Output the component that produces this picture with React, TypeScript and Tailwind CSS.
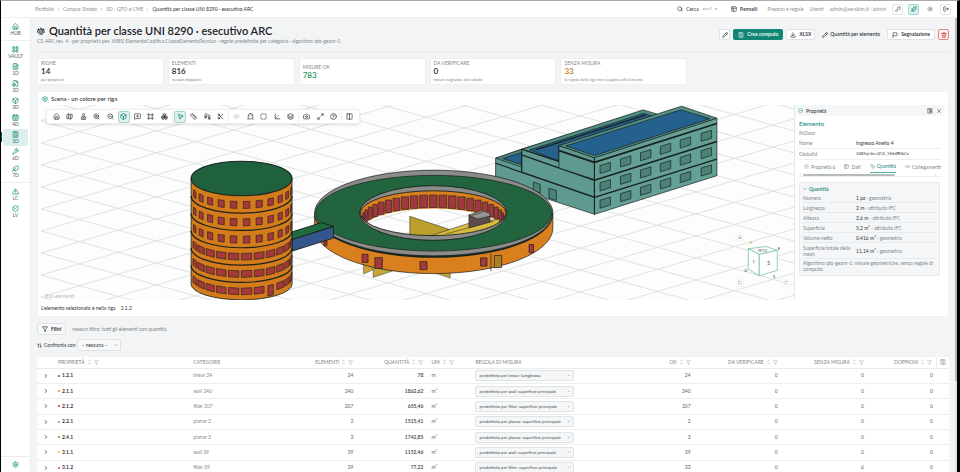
import React from "react";
import {
  House, LayoutGrid, FileText, FileBox, Box, CalendarRange, Calculator, Wrench, Leaf, TriangleAlert, BadgeCheck, Settings,
  Search, PanelsTopLeft, Sparkles, Sun, LogOut, Pencil, Download, Flag, Trash2, Scale, Map as MapIcon, Stamp, ZoomIn, ZoomOut,
  MessageSquarePlus, Frame, Boxes, MousePointer2, Ruler, Footprints, Scissors, Eye, Ghost, SquareDashed, Axis3d, Layers,
  Camera, Maximize2, CircleHelp, Columns2, X, Table2, Link2, List, ChevronRight, ChevronLeft, ChevronDown, ChevronUp, Filter, ArrowUpDown, Columns3,
  LayoutPanelLeft, CircleCheck, KeyRound, RotateCcw, RotateCw,
} from "lucide-react";

type Icon = React.ComponentType<{ className?: string; strokeWidth?: number }>;

/* ---------- navigation ---------- */

const NAV: { label: string; icon: Icon }[][] = [
  [{ label: "HUB", icon: House }],
  [
    { label: "VAULT", icon: LayoutGrid },
    { label: "1D", icon: FileText },
    { label: "2D", icon: FileBox },
    { label: "3D", icon: Box },
    { label: "4D", icon: CalendarRange },
    { label: "5D", icon: Calculator },
    { label: "6D", icon: Wrench },
    { label: "7D", icon: Leaf },
  ],
  [
    { label: "LC", icon: TriangleAlert },
    { label: "LV", icon: BadgeCheck },
  ],
];

function Sidebar() {
  return (
    <nav className="flex w-[30px] shrink-0 flex-col border-r border-[#e9ebed] bg-white pt-[3px]">
      {NAV.map((group, g) => (
        <div key={g} className={g === 0 ? "pb-[2px]" : "border-t border-[#eceeef] pt-[3px] pb-[2px]"}>
          {group.map(({ label, icon: Glyph }) => {
            const active = label === "5D";
            return (
              <a
                key={label}
                href="#"
                className={
                  "relative mx-[2px] flex h-[17px] flex-col items-center justify-center rounded-[2px] text-[5px] leading-[6px] " +
                  (active ? "bg-[#dcefec] text-[#12806f]" : "text-[#5d6468]")
                }
              >
                {active && <span className="absolute top-[3px] -left-[2px] h-[10px] w-px bg-[#0c5247]" />}
                <Glyph className="size-[7px] text-[#1d9078]" strokeWidth={2.5} />
                {label}
              </a>
            );
          })}
        </div>
      ))}
      <div className="mt-auto border-t border-[#e9ebed] py-1">
        <a href="#" aria-label="Impostazioni" className="flex justify-center">
          <Settings className="size-[7px] text-[#1d9078]" strokeWidth={2.5} />
        </a>
      </div>
    </nav>
  );
}

function TopBar() {
  return (
    <header className="flex h-[17px] shrink-0 items-center border-b border-[#eef0f1] bg-white pr-[6px] pl-[34px] text-[5px] leading-[7px] text-[#8b9297]">
      <nav className="flex items-center gap-[2px]" aria-label="Percorso">
        <a href="#">Portfolio</a>
        <ChevronRight className="size-[5px]" />
        <a href="#">Campus Simeto</a>
        <ChevronRight className="size-[5px]" />
        <a href="#">5D · QTO e CME</a>
        <ChevronRight className="size-[5px]" />
        <span className="text-[#30363a]">Quantità per classe UNI 8290 · esecutivo ARC</span>
      </nav>
      <div className="ml-auto flex items-center gap-[6px]">
        <button className="mr-2 flex items-center gap-[3px] text-[#30363a]">
          <Search className="size-[6px]" strokeWidth={2.5} />
          Cerca
          <kbd className="ml-px font-['Liberation_Mono',monospace] text-[4px] text-[#6b7378]">Ctrl K</kbd>
        </button>
        <button className="mr-1 flex items-center gap-[3px] font-semibold text-[#30363a]">
          <PanelsTopLeft className="size-[6px]" strokeWidth={2.5} />
          Pannelli
        </button>
        <a href="#">Prezzari e regole</a>
        <a href="#">Utenti</a>
        <span>admin@aerabim.it · admin</span>
        <div className="flex items-center gap-[5px] text-[#4b5257]">
          <button aria-label="Chiavi" className="flex size-[11px] items-center justify-center rounded-[2px] border border-[#e1e4e6]">
            <KeyRound className="size-[6px]" />
          </button>
          <button aria-label="Novità" className="flex size-[11px] items-center justify-center rounded-[2px] border border-[#a8d9d0] bg-[#e0f2ef] text-[#12907b]">
            <Sparkles className="size-[6px]" strokeWidth={2.5} />
          </button>
          <button aria-label="Tema" className="flex size-[11px] items-center justify-center">
            <Sun className="size-[6px]" />
          </button>
          <button aria-label="Esci" className="flex size-[11px] items-center justify-center rounded-[2px] border border-[#e1e4e6] text-[#22282b]">
            <LogOut className="size-[6px]" strokeWidth={2.5} />
          </button>
        </div>
      </div>
    </header>
  );
}

function PageHeader() {
  const outlined = "flex h-[11px] items-center gap-[3px] rounded-[2px] border border-[#dfe2e5] bg-white";
  return (
    <div className="flex justify-between border-b border-[#e8ebed] pt-[6px] pb-[6px]">
      <div>
        <h1 className="flex items-center gap-1 text-[11px] leading-[14px] font-semibold text-[#1c2225]">
          <Scale className="size-2" strokeWidth={2.5} />
          Quantità per classe UNI 8290 · esecutivo ARC
        </h1>
        <p className="text-[5px] leading-[7px] text-[#848b90]">
          CS-ARC rev. 4 · per proprietà pes. WBS) ElementoCodifica.ClasseElementoTecnico · regole predefinite per categoria · algoritmo qto-geom-1
        </p>
      </div>
      <div className="mt-[5px] flex h-[11px] items-center gap-[3px] text-[5px] leading-[7px] font-semibold text-[#262c30]">
        <button aria-label="Modifica" className={outlined + " w-[11px] justify-center"}>
          <Pencil className="size-[6px]" strokeWidth={2.5} />
        </button>
        <button className="flex h-[11px] items-center gap-[3px] rounded-[2px] bg-[#128675] px-[5px] text-white">
          <Calculator className="size-[6px]" />
          Crea computo
        </button>
        <button className={outlined + " px-[3px]"}>
          <Download className="size-[6px]" strokeWidth={2.5} />
          XLSX
        </button>
        <a href="#" className="flex items-center gap-[2px] px-1 font-medium">
          <Pencil className="size-[6px]" strokeWidth={2.5} />
          Quantità per elemento
        </a>
        <button className={outlined + " px-1"}>
          <Flag className="size-[6px]" strokeWidth={2.5} />
          Segnalazione
        </button>
        <button aria-label="Elimina" className="flex size-[11px] items-center justify-center rounded-[2px] border border-[#df8580] bg-[#fdf4f3] text-[#cf3f38]">
          <Trash2 className="size-[6px]" strokeWidth={2.5} />
        </button>
      </div>
    </div>
  );
}

const STATS = [
  { label: "RIGHE", value: "14", note: "per proprietà", tone: "text-[#22282b]" },
  { label: "ELEMENTI", value: "816", note: "nessun doppione", tone: "text-[#22282b]" },
  { label: "MISURE OK", value: "783", note: "", tone: "text-[#23935a]" },
  { label: "DA VERIFICARE", value: "0", note: "misure segnalate dal calcolo", tone: "text-[#22282b]" },
  { label: "SENZA MISURA", value: "33", note: "la regola della riga non si applica all'elemento", tone: "text-[#c07a22]" },
];

function Stats() {
  return (
    <section className="mt-[6px] grid grid-cols-7 gap-1">
      {STATS.map((s) => (
        <div key={s.label} className="flex h-[27px] flex-col justify-center overflow-hidden rounded-[2px] border border-[#eceeef] bg-white pl-[3px] whitespace-nowrap">
          <div className="text-[5px] leading-[7px] text-[#7f868b]">{s.label}</div>
          <div className={"text-[8px] leading-[9px] font-semibold " + s.tone}>{s.value}</div>
          {s.note && <div className="text-[4px] leading-[7px] text-[#7f868b]">{s.note}</div>}
        </div>
      ))}
    </section>
  );
}

/* ---------- 3D scene ---------- */

type Pt = [number, number];
const pts = (list: Pt[]) => list.map(([x, y]) => `${x.toFixed(1)},${y.toFixed(1)}`).join(" ");
const INK = "#18221f";

function Floor() {
  const lines = [];
  for (let i = -14; i < 26; i++) {
    const y = 99 + i * 22;
    lines.push(<line key={"d" + i} x1={42} y1={y} x2={794} y2={y + 208} />);
    lines.push(<line key={"u" + i} x1={42} y1={y} x2={794} y2={y - 222} />);
  }
  return (
    <g stroke="#dbdfe0" strokeWidth={0.9}>
      {lines}
    </g>
  );
}

/** A rectangle wrapped on an upright cylinder seen from slightly above. */
function curved(cx: number, rx: number, ry: number, y: number, h: number, deg: number, half: number): string {
  const at = (d: number): Pt => {
    const r = (d * Math.PI) / 180;
    return [cx + rx * Math.sin(r), y - ry * (1 - Math.cos(r))];
  };
  const [a, b] = [at(deg - half), at(deg + half)];
  return pts([a, b, [b[0], b[1] + h], [a[0], a[1] + h]]);
}

function Tower() {
  const cx = 242.3;
  const rx = 50.4;
  const shapes = [];
  for (let f = 0; f < 6; f++) {
    const low = f > 2;
    for (let k = -5; k <= 5; k++) {
      const door = f === 5 && k === 2;
      shapes.push(
        <polygon
          key={`${f}-${k}`}
          points={curved(cx, rx, 17, 201.5 + f * 17.3, door ? 10.5 : low ? 6.6 : 7, 5.7 + k * 14.8, low && !door ? 6 : 3.8)}
          fill="#a5383b"
          stroke={INK}
          strokeWidth={0.6}
        />,
      );
    }
  }
  return (
    <g>
      <path d="M191.9 178.5V284A50.4 15.7 0 0 0 292.7 284V178.5Z" fill="#d47b1b" stroke={INK} strokeWidth={0.8} />
      {shapes}
      {[1, 2, 3, 4, 5].map((f) => (
        <path key={f} d={`M191.9 ${178.8 + f * 17.3}a50.4 17 0 0 0 100.8 0`} fill="none" stroke={INK} strokeWidth={1.2} />
      ))}
      <ellipse cx={cx} cy={178.5} rx={rx} ry={17.3} fill="#1f613c" stroke={INK} strokeWidth={1} />
    </g>
  );
}

function Ring() {
  const inner = [];
  for (let k = -11; k <= 11; k++) {
    const r = (k * 7.8 * Math.PI) / 180;
    const x = 433.7 + 71 * Math.sin(r);
    const w = 7.4 * Math.cos(r) + 0.4;
    inner.push(
      <rect key={k} x={x - w / 2} y={217.5 - 22.5 * Math.cos(r)} width={w} height={12.5} fill="#a13840" stroke={INK} strokeWidth={0.6} />,
    );
  }
  return (
    <g strokeLinejoin="round">
      <g fill="#c3a53a" stroke={INK} strokeWidth={0.4}>
        <path d="M364 264v10l9-4v-6Z" />
        <path d="M373.7 266v11.3L393 271v-4Z" />
        <path d="M434 272l16.7 6v-8Z" />
      </g>
      <path d="M315.2 213V228A119 45.5 0 0 0 553.2 228V213Z" fill="#d97f1d" stroke={INK} strokeWidth={0.7} />
      <ellipse cx={434.2} cy={214.2} rx={119} ry={43.6} fill={INK} />
      <ellipse cx={434.2} cy={213} rx={119} ry={42.8} fill="#8b8b89" stroke={INK} strokeWidth={0.7} />
      <ellipse cx={434.2} cy={213.2} rx={118} ry={37.8} fill="#21643e" stroke={INK} strokeWidth={0.7} />
      <ellipse cx={433.7} cy={213} rx={73.7} ry={27.3} fill="#8b8b89" stroke={INK} strokeWidth={0.9} />
      <clipPath id="court">
        <ellipse cx={433.7} cy={213.2} rx={72.8} ry={22.4} />
      </clipPath>
      <clipPath id="ground">
        <ellipse cx={433.7} cy={231.5} rx={72.8} ry={23} />
      </clipPath>
      <g clipPath="url(#court)">
        <rect x={360} y={185} width={150} height={60} fill="#d97f1d" />
        {inner}
        <g clipPath="url(#ground)">
          <rect x={360} y={185} width={150} height={60} fill="#fdfdfd" />
          <Floor />
        </g>
        <g stroke={INK} strokeWidth={0.5}>
          <path d="M410.3 216.3L450 229.5L436 236H410.3Z" fill="#bd9f2f" />
          <path d="M430 236L470 223L500 219L499 224L462 238Z" fill="#d9b93e" />
          <path d="M446 234L494 221" fill="none" />
          <path d="M469.3 215V228L490.5 222V214Z" fill="#5b4b49" />
          <path d="M469.3 215L482 210.6L490.5 213.6V216L478 219Z" fill="#949494" />
          <path d="M472 215.5L483 212.3" fill="none" />
        </g>
      </g>
      <ellipse cx={433.7} cy={213.2} rx={72.8} ry={22.4} fill="none" stroke={INK} strokeWidth={0.9} />
      <g fill="#a5383b" stroke={INK} strokeWidth={0.7}>
        <rect x={324.6} y={240.6} width={3} height={5} />
        <rect x={362.6} y={254.2} width={6} height={8.2} />
        <rect x={375.5} y={257.6} width={7.4} height={10.8} />
        <rect x={420.5} y={261.5} width={7} height={8} />
        <rect x={481} y={257.8} width={6.4} height={8.2} />
        <rect x={529.4} y={244.4} width={4.4} height={8.2} />
        <rect x={494.8} y={255.4} width={7.2} height={12} fill="#a8802a" />
        <path d="M491.3 253.5V271" />
      </g>
      <path d="M293 231.8L322 222.6L334 226.2L293 239.6Z" fill="#1f6b3f" stroke={INK} strokeWidth={0.9} />
      <path d="M293 239.6L334 226.6V238L293 251Z" fill="#34568c" stroke={INK} strokeWidth={0.9} />
    </g>
  );
}

function Block() {
  const windows = [];
  const cols = [600.3, 620.7, 640.7, 660.5, 680.4, 701.3];
  for (const x of cols) {
    for (let r = 0; r < 3; r++) {
      const y = 165.6 - (x - 600.3) * 0.318 + r * 17.3;
      windows.push(
        <polygon key={`${x}-${r}`} points={pts([[x, y], [x + 10.4, y - 3.2], [x + 10.4, y + 4.8], [x, y + 8]])} fill="#4b8177" stroke={INK} strokeWidth={0.7} />,
      );
    }
  }
  return (
    <g stroke={INK} strokeWidth={0.7} strokeLinejoin="round">
      <path d="M496 158.3L522 149.3L640 112V160L594.7 214.3L496 182Z" fill="#5f9a90" />
      <path d="M496 158.3L522 149.3V167L496 158.3Z" fill="#4f897f" />
      <path d="M503 158.6L522 152.6V164.5Z" fill="#26618c" />
      <path d="M522 149.3L643.3 110L656.7 114L594 170L522 150.5Z" fill="#508d82" />
      <path d="M530 150L644 113.5L652 116L559 146V161Z" fill="#26618c" />
      <path d="M536 150L646 115" fill="none" strokeWidth={1.4} />
      <path d="M522 149.3V172L594.7 197V162L559.3 161.5Z" fill="#5f9a90" />
      <path d="M522 149.3L559.3 161.5M522 155L594.7 180.4M496 163.3L594.7 197.4M522 173V151" fill="none" strokeWidth={1.2} />
      <path d="M559.3 145.7L594.7 157.7V179.5L559.3 168Z" fill="#5f9a90" />
      <path d="M594.7 157.7L717 118.3V175.7L594.7 214.3Z" fill="#64a096" />
      <path d="M559.3 145.7L681.7 106.3L717 118.3L594.7 157.7Z" fill="#558f84" />
      <path d="M566 146L681 110L710 118.8L595 155.6Z" fill="#25618f" />
      <path d="M559.3 150.7L594.7 162.4L717 123.6" fill="none" strokeWidth={1.8} />
      <path d="M594.7 180.2L717 141.6M594.7 197.4L717 159.2" fill="none" strokeWidth={1.5} />
      <path d="M594.7 157.7V214.3" fill="none" strokeWidth={1} />
      {windows}
      <path d="M533.7 182.2L540.5 184.4V193.5L533.7 190ZM549.3 188.2L556.7 190.6V200.5L549.3 198Z" fill="#4b8177" />
    </g>
  );
}

function ViewCube() {
  return (
    <g>
      <g stroke="#62b9a8" strokeWidth={0.7} strokeLinejoin="round">
        <path d="M748.3 248.7L766 246.5L777.3 250.3L759.3 254.3Z" fill="#fff" />
        <path d="M748.3 248.7L759.3 254.3V275.7L748.3 269Z" fill="#fff" />
        <path d="M759.3 254.3L777.3 250.3V270.3L759.3 275.7Z" fill="#fff" />
      </g>
      <g fontSize={4} fill="#30363a" textAnchor="middle">
        <text x={762.5} y={251.5} fontSize={3}>TETTO</text>
        <text x={753.6} y={263}>1</text>
        <text x={768.6} y={264.6} fontSize={5}>S</text>
        <text x={751} y={244} fill="#c79a3c">N</text>
        <text x={779} y={250}>E</text>
        <text x={746} y={272.4}>O</text>
        <text x={774} y={278}>S</text>
      </g>
      <g fill="#fff" stroke="#dfe3e4" strokeWidth={0.5}>
        <circle cx={740} cy={237} r={4} />
        <circle cx={740} cy={282.5} r={4} />
        <circle cx={785.5} cy={282.5} r={4} />
      </g>
      <House x={737.7} y={234.6} width={4.6} height={4.6} color="#7f868b" />
      <RotateCcw x={737.7} y={280.2} width={4.6} height={4.6} color="#7f868b" />
      <RotateCw x={783.2} y={280.2} width={4.6} height={4.6} color="#7f868b" />
    </g>
  );
}

const TOOLS: { label: string; icon: Icon; state?: "on" | "off" }[][] = [
  [
    { label: "Vista iniziale", icon: House },
    { label: "Mappa", icon: MapIcon },
    { label: "Orientamento", icon: Stamp },
    { label: "Ingrandisci", icon: ZoomIn },
    { label: "Riduci", icon: ZoomOut },
    { label: "Modello", icon: Box, state: "on" },
    { label: "Commenta", icon: MessageSquarePlus },
    { label: "Griglia", icon: Frame },
    { label: "Gruppi", icon: Boxes },
  ],
  [
    { label: "Seleziona", icon: MousePointer2, state: "on" },
    { label: "Misura", icon: Ruler },
    { label: "Cammina", icon: Footprints },
    { label: "Seziona", icon: Scissors },
  ],
  [
    { label: "Mostra", icon: Eye, state: "off" },
    { label: "Trasparenza", icon: Ghost },
    { label: "Area", icon: SquareDashed },
    { label: "Assi", icon: Axis3d },
    { label: "Livelli", icon: Layers },
  ],
  [
    { label: "Istantanea", icon: Camera },
    { label: "Schermo intero", icon: Maximize2 },
    { label: "Aiuto", icon: CircleHelp },
  ],
  [{ label: "Pannello", icon: Columns2 }],
];

function Toolbar() {
  return (
    <div className="absolute top-1 left-[5px] flex h-[15px] w-[314px] items-center justify-between rounded-[3px] border border-[#eceeef] bg-white px-[3px] shadow-sm">
      {TOOLS.map((group, g) => (
        <React.Fragment key={g}>
          {g > 0 && <span className="h-3 w-px bg-[#eceeef]" />}
          {group.map(({ label, icon: Glyph, state }) => (
            <button
              key={label}
              aria-label={label}
              className={
                "flex size-3 items-center justify-center rounded-[2px] " +
                (state === "on"
                  ? "border border-[#a3d3cb] bg-[#dff1ee] text-[#12806f]"
                  : state === "off"
                    ? "text-[#c6cbce]"
                    : "text-[#3b4246]")
              }
            >
              <Glyph className="size-[7px] shrink-0" strokeWidth={2.5} />
            </button>
          ))}
        </React.Fragment>
      ))}
    </div>
  );
}

const MEASURES = [
  ["Numero", "1 pz", "geometria"],
  ["Larghezza", "2 m", "attributo IFC"],
  ["Altezza", "2,6 m", "attributo IFC"],
  ["Superficie", "5,2 m²", "attributo IFC"],
  ["Volume netto", "0,416 m³", "geometria"],
  ["Superficie totale della mesh", "11,14 m²", "geometria"],
];

function Properties() {
  return (
    <aside className="w-[151px] shrink-0 border-l border-[#e6e9ea] text-[5px] leading-[6px] text-[#7f868b]">
      <div className="flex h-[11px] items-center gap-[3px] bg-[#f4f6f7] px-[3px] text-[#30363a]">
        <CircleCheck className="size-[5px] text-[#12907b]" />
        <span className="font-medium">Proprietà</span>
        <button aria-label="Disposizione" className="ml-auto">
          <LayoutPanelLeft className="size-[6px]" />
        </button>
        <button aria-label="Chiudi">
          <X className="size-[6px]" />
        </button>
      </div>
      <div className="px-1 pt-1">
        <h2 className="text-[6px] leading-[7px] font-medium text-[#1a8878]">Elemento</h2>
        <p className="pt-[3px] pb-[2px]">IfcDoor</p>
        <dl>
          <div className="flex border-b border-[#eceeef] py-[2px]">
            <dt className="w-[57px]">Nome</dt>
            <dd className="text-[#30363a]">Ingresso Anello 4</dd>
          </div>
          <div className="flex border-b border-[#eceeef] py-[2px]">
            <dt className="w-[57px]">GlobalId</dt>
            <dd className="font-['DejaVu_Sans_Mono',monospace] text-[4px] text-[#30363a]">3O8SqrmcvQtO_Yk6dMUbCx</dd>
          </div>
        </dl>
        <div className="flex items-center gap-[9px] overflow-hidden pl-[5px] whitespace-nowrap" role="tablist">
          <button role="tab" className="flex h-[13px] shrink-0 items-center gap-[2px]"><List className="size-[5px]" />Proprietà 6</button>
          <button role="tab" className="flex h-[13px] shrink-0 items-center gap-[2px]"><Table2 className="size-[5px]" />Dati</button>
          <button role="tab" aria-selected="true" className="flex h-[13px] shrink-0 items-center gap-[2px] border-b border-[#4aab9b] text-[#1a8878]">
            <Ruler className="size-[5px]" />Quantità
          </button>
          <button role="tab" className="flex h-[13px] shrink-0 items-center gap-[2px]"><Link2 className="size-[5px]" />Collegamenti</button>
        </div>
        <div className="mb-[5px] flex items-center gap-px border-b border-[#eceeef] pr-1">
          <ChevronLeft className="size-[3px]" strokeWidth={3} />
          <div className="mr-auto h-[2px] w-2/3 rounded-full bg-[#b5bcbe]" />
          <ChevronRight className="size-[3px]" strokeWidth={3} />
        </div>
        <section className="mr-px rounded-[2px] border border-[#e6eaec] bg-[#f4f6f8] px-[3px] pt-[2px] pb-[3px]">
          <h3 className="flex items-center gap-[2px] leading-[8px] font-semibold text-[#1a8878]">
            <ChevronDown className="size-1" strokeWidth={3} />
            Quantità
          </h3>
          <dl>
            {MEASURES.map(([name, value, source]) => (
              <div key={name} className="flex items-center border-b border-[#e8ebed] pt-[2px] pb-px">
                <dt className="w-[53px] shrink-0 pr-1">{name}</dt>
                <dd>
                  <span className="text-[#30363a]">{value}</span> · {source}
                </dd>
              </div>
            ))}
          </dl>
          <p className="pt-px">Algoritmo qto-geom-1: misure geometriche, senza regole di computo.</p>
        </section>
      </div>
    </aside>
  );
}

function Scene() {
  return (
    <section className="mt-[6px] rounded-[2px] border border-[#eef0f1] bg-white px-[3px] pb-1 text-[5px] leading-[7px] text-[#30363a]">
      <h2 className="flex h-[13px] items-center gap-[3px] pl-px text-[6px] font-medium">
        <Box className="size-[6px] text-[#12907b]" strokeWidth={2.5} />
        Scena · un colore per riga
      </h2>
      <div className="flex h-[195px]">
        <div className="relative min-w-0 flex-1 overflow-hidden bg-[#fdfdfd]">
          <svg className="block size-full" viewBox="42 105 752 195" preserveAspectRatio="xMidYMid slice" role="img" aria-label="Modello tridimensionale">
            <Floor />
            <Block />
            <Tower />
            <Ring />
            <ViewCube />
            <text x={46} y={298} fontSize={5} fill="#b4babd">816 elementi</text>
          </svg>
          <Toolbar />
        </div>
        <Properties />
      </div>
      <p className="pt-[5px]">
        L'elemento selezionato è nella riga <span className="ml-1">2.1.2</span>
      </p>
    </section>
  );
}

/* ---------- quantities table ---------- */

const ROWS = [
  { code: "1.2.1", dot: "bg-[#3f5f95]", cat: "linear 24", n: "24", q: "78", um: "m", rule: "predefinita per linear: lunghezza", ok: "24", miss: "0" },
  { code: "2.1.1", dot: "bg-[#e08a2b]", cat: "wall 240", n: "240", q: "1862,62", um: "m²", rule: "predefinita per wall: superficie principale", ok: "240", miss: "0" },
  { code: "2.1.2", dot: "bg-[#c23a4f]", cat: "filler 207", n: "207", q: "655,46", um: "m²", rule: "predefinita per filler: superficie principale", ok: "207", miss: "0" },
  { code: "2.2.1", dot: "bg-[#5fb09b]", cat: "planar 2", n: "2", q: "1515,41", um: "m²", rule: "predefinita per planar: superficie principale", ok: "2", miss: "0" },
  { code: "2.4.1", dot: "bg-[#3f9a45]", cat: "planar 3", n: "3", q: "1742,85", um: "m²", rule: "predefinita per planar: superficie principale", ok: "3", miss: "0" },
  { code: "3.1.1", dot: "bg-[#e6c03c]", cat: "wall 39", n: "39", q: "1152,46", um: "m²", rule: "predefinita per wall: superficie principale", ok: "39", miss: "0" },
  { code: "3.1.2", dot: "bg-[#b0506f]", cat: "filler 39", n: "39", q: "77,22", um: "m²", rule: "predefinita per filler: superficie principale", ok: "33", miss: "6" },
];

function Head({ children, right, plain }: { children: string; right?: boolean; plain?: boolean }) {
  return (
    <th className="px-1 font-normal">
      <span className={"flex items-center gap-[3px] " + (right ? "justify-end" : "")}>
        {children}
        {!plain && (
          <>
            <span className="flex flex-col">
              <ChevronUp className="size-[3px]" strokeWidth={4} />
              <ChevronDown className="size-[3px]" strokeWidth={4} />
            </span>
            <Filter className="size-[5px] text-[#9aa1a5]" />
          </>
        )}
      </span>
    </th>
  );
}

function QuantityTable() {
  return (
    <table className="mt-[6px] h-[119px] w-full table-fixed border-collapse bg-white text-left text-[5px] leading-[7px] text-[#5d6468]">
      <colgroup>
        <col className="w-[17px]" />
        <col className="w-[135px]" />
        <col className="w-[100px]" />
        <col className="w-[68px]" />
        <col className="w-[70px]" />
        <col className="w-[44px]" />
        <col className="w-[106px]" />
        <col className="w-[117px]" />
        <col className="w-[87px]" />
        <col className="w-[86px]" />
        <col className="w-[69px]" />
        <col className="w-[12px]" />
      </colgroup>
      <thead>
        <tr className="h-[11px] border-b border-[#e9ebed] whitespace-nowrap text-[#7f868b]">
          <th aria-label="Espandi" />
          <Head>PROPRIETÀ</Head>
          <Head plain>CATEGORIE</Head>
          <Head right>ELEMENTI</Head>
          <Head right>QUANTITÀ</Head>
          <Head>UM</Head>
          <Head plain>REGOLA DI MISURA</Head>
          <Head right>OK</Head>
          <Head right>DA VERIFICARE</Head>
          <Head right>SENZA MISURA</Head>
          <Head right>DOPPIONI</Head>
          <th className="border-l border-[#eceeef]">
            <button aria-label="Colonne" className="flex w-full justify-center">
              <Columns3 className="size-[6px]" />
            </button>
          </th>
        </tr>
      </thead>
      <tbody>
        {ROWS.map((r) => (
          <tr key={r.code} className="border-b border-[#eceeef]">
            <td>
              <button aria-label={"Espandi " + r.code} className="flex w-full justify-center pl-px">
                <ChevronRight className="size-[6px] text-[#30363a]" strokeWidth={3} />
              </button>
            </td>
            <td className="px-1">
              <span className="flex items-center gap-[2px] font-bold text-[#30363a]">
                <i className={"size-[2px] rounded-full " + r.dot} />
                {r.code}
              </span>
            </td>
            <td className="px-1 text-[#858c91]">{r.cat}</td>
            <td className="px-1 text-right">{r.n}</td>
            <td className="px-1 text-right font-semibold text-[#30363a]">{r.q}</td>
            <td className="px-1">{r.um}</td>
            <td className="px-1">
              <span className="relative block">
                <select aria-label={"Regola di misura " + r.code} className="block h-[11px] w-full appearance-none rounded-[2px] border border-[#dfe3e5] bg-[#f4f6f7] pl-[3px] font-['Noto_Sans',sans-serif] text-[4px] leading-[7px] text-[#30363a]">
                  <option>{r.rule}</option>
                </select>
                <ChevronDown className="pointer-events-none absolute top-[4px] right-[4px] size-[3px]" strokeWidth={3} />
              </span>
            </td>
            <td className="px-1 text-right">{r.ok}</td>
            <td className="px-1 text-right">0</td>
            <td className="px-1 text-right">{r.miss}</td>
            <td className="px-1 text-right">0</td>
            <td />
          </tr>
        ))}
      </tbody>
    </table>
  );
}

export default function App() {
  return (
    <div className="flex h-screen flex-col overflow-hidden border-t border-r-3 border-l border-t-[#a9a9ab] border-r-black border-l-black bg-[#f2f4f5] font-['Lato','Noto_Sans',sans-serif]">
      <TopBar />
      <div className="flex min-h-0 flex-1">
        <Sidebar />
        <main className="min-w-0 flex-1 overflow-hidden pr-[6px] pl-[6px]">
          <PageHeader />
          <Stats />
          <Scene />
          <div className="mt-[6px] flex items-center gap-[6px] text-[5px] leading-[7px] text-[#7f868b]">
            <button className="flex h-[12px] items-center gap-[3px] rounded-[2px] border border-[#dfe3e5] bg-[#f7f8f9] px-1 font-bold text-[#262c30]">
              <Filter className="size-[6px]" strokeWidth={2.5} />
              Filtri
            </button>
            nessun filtro: tutti gli elementi con quantità
          </div>
          <div className="mt-1 flex items-center gap-[2px] text-[5px] leading-[7px] text-[#30363a]">
            <ArrowUpDown className="size-[5px]" strokeWidth={2.5} />
            <label htmlFor="compare">Confronta con</label>
            <span className="relative">
              <select id="compare" className="block h-[12px] w-[44px] appearance-none rounded-[2px] border border-[#dfe3e5] bg-[#f7f8f9] pl-[3px]">
                <option>– nessuna –</option>
              </select>
              <ChevronDown className="pointer-events-none absolute top-1 right-[3px] size-1" />
            </span>
          </div>
          <QuantityTable />
        </main>
        <div className="w-[2px] bg-[#e3e6e7]">
          <div className="h-4/5 bg-[#b3b8bb]" />
        </div>
      </div>
    </div>
  );
}
